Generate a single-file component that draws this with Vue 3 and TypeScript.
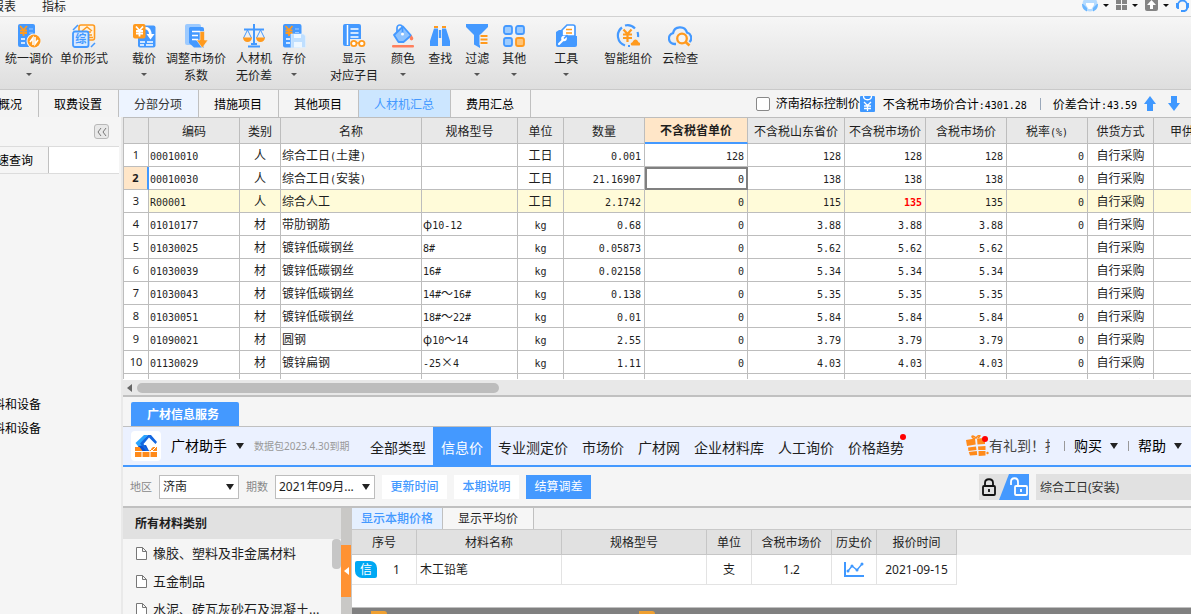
<script setup lang="ts">
import { h, ref } from 'vue'

interface Tool { icon: string; lines: string[]; menu?: boolean }
interface Row {
  code: string; kind: string; name: string; spec: string; unit: string
  qty: string; prov: string; sd: string; net: string; gross: string; tax: string
}

// Half-width characters take exactly half the width of a Chinese character.
const Song = (props: { t: string }) =>
  (props.t.match(/[\x20-\x7e]+|[^\x20-\x7e]+/g) ?? []).map(s =>
    h('span', { class: s.charCodeAt(0) < 127 ? 'half' : 'full' }, s))
Song.props = ['t']

const B = '#4499ff'
const O = '#ff9a1e'
const yen = (x: number, y: number, c: string) =>
  `<path d="M${x} ${y}l3.5 4l3.5-4M${x} ${y + 4.5}h7M${x} ${y + 7}h7M${x + 3.5} ${y + 4}v6" fill="none" stroke="${c}" stroke-width="1.8"/>`

const icons: Record<string, string> = {
  unify: `<rect x="1" width="17" height="23" rx="2" fill="${B}"/>${yen(3, 2, O)}<path d="M12 5h4M12 9h4" stroke="#9ccaff" stroke-width="1"/><path d="M4 15h4M4 19h4" stroke="#fff" stroke-width="1.5"/><circle cx="17" cy="17" r="7.5" fill="#f4f4f4"/><circle cx="17" cy="17" r="6.5" fill="${O}"/><path d="M13 18l3-4v7M21 16l-3 4v-7" fill="none" stroke="#fff" stroke-width="1.6"/>`,
  form: `<path d="M1 6L6 1M19 23l4-4" stroke="${B}" stroke-width="1.5"/><rect x="7" y="1" width="15.5" height="15" rx="2" fill="#fff3e0" stroke="${O}" stroke-width="1.6"/><path d="M10 7l5-4l5 4M11 8h8M17 11h3M17 13.500h4" stroke="${O}" stroke-width="1.5" fill="none"/><rect x="1" y="7.5" width="15.500" height="15.5" rx="2" fill="#d8eaff" stroke="${B}" stroke-width="1.8"/><text x="8.800" y="19.3" text-anchor="middle" font-size="11" font-weight="700" fill="${B}" font-family="Noto Sans CJK SC, sans-serif">综</text>`,
  load: `<rect x="6" y="1.5" width="17.500" height="22" rx="2" fill="${B}"/><path d="M8 18h5M15 18h6M8 21h4M14 21h7" stroke="#fff" stroke-width="1.3"/><path d="M13 4c4 0 5.500 3 5.500 8" fill="none" stroke="#fff" stroke-width="2.600"/><path d="M14.500 10h8l-4 5.500z" fill="#fff"/><rect x="1" y="0" width="12.500" height="14.500" rx="2" fill="${O}"/>${yen(4, 2.5, '#fff')}`,
  adjust: `<rect x="1" y="0" width="16" height="21" rx="2" fill="#9ccaff"/><path d="M6 3h12a2 2 0 0 1 2 2v18.500H10L5 19V4z" fill="${B}"/><path d="M8 7.500h8M8 11.500h6M8 15.500h6" stroke="#fff" stroke-width="1.7"/><path d="M16 7.500h4.500V16h3.500l-5.700 8l-5.800-8H16z" fill="${O}" stroke="#f0f0f0" stroke-width=".6"/>`,
  scale: `<path d="M12 0v21M2 5.500h20M6 22.500h12M9 20h6" stroke="${B}" stroke-width="2"/><path d="M5.500 6L1.500 14M5.500 6l4 8M18.500 6l-4 8M18.500 6l4 8" stroke="${B}" stroke-width="1" fill="none"/><path d="M1 13.500h9a4.500 4.500 0 0 1-9 0zM14 13.500h9a4.500 4.500 0 0 1-9 0z" fill="${O}"/>`,
  store: `<rect x="1" width="18.500" height="23.500" rx="2" fill="${B}"/>${yen(3.5, 2, O)}<path d="M13 5h4M13 8.500h4" stroke="#9ccaff"/><path d="M4 15h4M4 19h4" stroke="#fff" stroke-width="1.500"/><path d="M9 10h12.500l2 2v11.500H9z" fill="#bfdfff" stroke="#e4f1ff" stroke-width=".6"/><path d="M12 10h7v4h-7zM12 18h8v5.500h-8z" fill="#eef7ff"/>`,
  show: `<rect x="1" y="0" width="18" height="22" rx="2" fill="${B}"/><path d="M5.500 1v20" stroke="#fff" stroke-width="1.500"/><path d="M8.500 5h8M8.500 9h8M8.500 13h8" stroke="#fff" stroke-width="1.600"/><path d="M8 24v-9h16v9z" fill="#eee"/><circle cx="11.800" cy="19.500" r="2.700" fill="#fff" stroke="${O}" stroke-width="1.800"/><circle cx="19.800" cy="19.500" r="2.700" fill="#fff" stroke="${O}" stroke-width="1.800"/><path d="M14 19h3" stroke="${O}" stroke-width="1.500"/>`,
  color: `<path d="M3 11L12 2.500l8 9l-7.500 6.500h-5z" fill="#8dc3ff" stroke="${B}" stroke-width="1.800" stroke-linejoin="round"/><path d="M6 8V4c0-4 5.500-4 5.500 0v6" fill="none" stroke="${B}" stroke-width="1.700"/><circle cx="11.500" cy="10" r="1.500" fill="#fff"/><path d="M20.500 11c1 1.800 1.800 2.500 1.800 3.600a1.800 1.800 0 0 1-3.600 0c0-1.100.8-1.800 1.800-3.600z" fill="#ff7f5c"/><rect x="1" y="21" width="22" height="2.600" rx="1" fill="#ff7f5c"/>`,
  find: `<path d="M6 4.500h4V22H2v-5zM14 4.500h4L22 17v5h-8z" fill="${B}"/><path d="M10.800 6h2.400v8h-2.400z" fill="${B}"/><path d="M6 2h4v2H6zM14 2h4v2h-4z" fill="${O}"/>`,
  filter: `<path d="M1 0h22v3l-8 8v13l-6-3.500V11L1 3z" fill="${B}"/><path d="M14.500 12.500h8M14.500 16h8M14.500 19.500h8" stroke="#f2f2f2" stroke-width="3.500"/><path d="M15.500 12h7M15.500 15.500h7M15.500 19h7" stroke="${O}" stroke-width="1.800"/>`,
  other: `<g fill="#9dccff" stroke="${B}" stroke-width="1.800"><rect x="2" y="2" width="8" height="8" rx="2"/><rect x="14" y="2" width="8" height="8" rx="2"/><rect x="2" y="14" width="8" height="8" rx="2"/></g><rect x="14" y="14" width="8" height="8" rx="2" fill="#ffc477" stroke="${O}" stroke-width="1.800"/>`,
  tool: `<path d="M8 6L13 1h6a2 2 0 0 1 2 2v9H8z" fill="#fff" stroke="${B}" stroke-width="1.700"/><path d="M12 5.500h6M12 9h6" stroke="${O}" stroke-width="1.600"/><path d="M2 8l3-2h3v6h15v9a2 2 0 0 1-2 2H4a2 2 0 0 1-2-2z" fill="${B}"/><path d="M5 20l4-4" stroke="#fff" stroke-width="2.200" stroke-linecap="round"/><circle cx="10" cy="14.500" r="2.800" fill="#fff"/><path d="M10 14.500l3.500-3.500" stroke="${B}" stroke-width="1.600"/>`,
  smart: `<path d="M9 21.500A10.300 10.300 0 0 1 6 3.500M9 1.500a10.300 10.300 0 0 1 10 3M21.500 8a10.300 10.300 0 0 1 .5 5M12 22h2" fill="none" stroke="${B}" stroke-width="2.200"/><path d="M7.500 5.500l4 4.500l4-4.500M7 10.500h9M7 14h9M11.500 10v8" fill="none" stroke="${O}" stroke-width="2.200"/><path d="M16.500 21.500a1.500 1.500 0 0 1-.5-3c1 0 1-3 3.500-3s2.500 3 3.500 3a1.500 1.500 0 0 1-.5 3z" fill="${O}"/>`,
  cloud: `<path d="M8 20H6.500A5.500 5.500 0 0 1 5 9.200 7.200 7.200 0 0 1 19 8.500a5.600 5.600 0 0 1 2.500 9.500" fill="none" stroke="${B}" stroke-width="2.300"/><circle cx="14" cy="14.500" r="4.800" fill="#f4f4f4" stroke="${O}" stroke-width="2.300"/><path d="M17.500 18l4 3.500" stroke="${O}" stroke-width="2.600"/>`,
}

const groups: { cls: string; tools: Tool[] }[] = [
  { cls: 'g-a', tools: [
    { icon: 'unify', lines: ['统一调价'], menu: true },
    { icon: 'form', lines: ['单价形式'] },
  ] },
  { cls: 'g-b', tools: [
    { icon: 'load', lines: ['载价'], menu: true },
    { icon: 'adjust', lines: ['调整市场价', '系数'] },
    { icon: 'scale', lines: ['人材机', '无价差'] },
    { icon: 'store', lines: ['存价'], menu: true },
  ] },
  { cls: 'g-c', tools: [
    { icon: 'show', lines: ['显示', '对应子目'] },
    { icon: 'color', lines: ['颜色'], menu: true },
    { icon: 'find', lines: ['查找'] },
    { icon: 'filter', lines: ['过滤'], menu: true },
    { icon: 'other', lines: ['其他'], menu: true },
  ] },
  { cls: 'g-d', tools: [{ icon: 'tool', lines: ['工具'], menu: true }] },
  { cls: 'g-b', tools: [
    { icon: 'smart', lines: ['智能组价'] },
    { icon: 'cloud', lines: ['云检查'] },
  ] },
]

const tabs = ['工程概况', '取费设置', '分部分项', '措施项目', '其他项目', '人材机汇总', '费用汇总']
const activeTab = ref('人材机汇总')

const columns = ['编码', '类别', '名称', '规格型号', '单位', '数量', '不含税省单价', '不含税山东省价', '不含税市场价', '含税市场价', '税率(%)', '供货方式', '甲供数量']

const mk = (a: string[]): Row => ({
  code: a[0], kind: a[1], name: a[2], spec: a[3], unit: a[4], qty: a[5],
  prov: a[6], sd: a[7], net: a[8], gross: a[9], tax: a[10],
})
const rows: Row[] = [
  ['00010010', '人', '综合工日(土建)', '', '工日', '0.001', '128', '128', '128', '128', '0'],
  ['00010030', '人', '综合工日(安装)', '', '工日', '21.16907', '0', '138', '138', '138', '0'],
  ['R00001', '人', '综合人工', '', '工日', '2.1742', '0', '115', '135', '135', '0'],
  ['01010177', '材', '带肋钢筋', 'φ10-12', 'kg', '0.68', '0', '3.88', '3.88', '3.88', '0'],
  ['01030025', '材', '镀锌低碳钢丝', '8#', 'kg', '0.05873', '0', '5.62', '5.62', '5.62', ''],
  ['01030039', '材', '镀锌低碳钢丝', '16#', 'kg', '0.02158', '0', '5.34', '5.34', '5.34', ''],
  ['01030043', '材', '镀锌低碳钢丝', '14#～16#', 'kg', '0.138', '0', '5.35', '5.35', '5.35', ''],
  ['01030051', '材', '镀锌低碳钢丝', '18#～22#', 'kg', '0.01', '0', '5.84', '5.84', '5.84', '0'],
  ['01090021', '材', '圆钢', 'φ10～14', 'kg', '2.55', '0', '3.79', '3.79', '3.79', '0'],
  ['01130029', '材', '镀锌扁钢', '-25×4', 'kg', '1.11', '0', '4.03', '4.03', '4.03', '0'],
  ['01130031', '材', '镀锌扁钢', '-40×4', 'kg', '1.26', '0', '4.03', '4.03', '4.03', '0'],
].map(mk)

const sources = ['全部类型', '信息价', '专业测定价', '市场价', '广材网', '企业材料库', '人工询价', '价格趋势']
const activeSource = ref('信息价')
const categories = ['橡胶、塑料及非金属材料', '五金制品', '水泥、砖瓦灰砂石及混凝土...']
const controlPrice = ref(false)
const keyword = ref('综合工日(安装)')
</script>

<template>
  <div class="app">
    <header class="menubar">
      <nav class="menus">
        <button type="button">报表</button>
        <button type="button">指标</button>
      </nav>
      <div class="sys">
        <button type="button" aria-label="用户">
          <svg width="16" height="16" viewBox="0 0 16 16"><circle cx="8" cy="4" r="7.500" fill="#b5dbff"/><path d="M0 4a8 8 0 0 0 5 7.500V8L1 4zM16 4a8 8 0 0 1-5 7.500V8l4-4z" fill="#6ab6ff"/><path d="M4 3h8v2l-2.500 4h-3L4 5z" fill="#fff"/></svg>
          <i class="caret small dark"></i>
        </button>
        <button type="button" aria-label="窗口">
          <svg width="11" height="16" viewBox="0 0 11 16"><path d="M0 0h5v4H0zM6 0h5v4H6zM0 5h5v5H0zM6 5h5v5H6z" fill="#848484"/></svg>
          <i class="caret small dark"></i>
        </button>
        <button type="button" aria-label="上传">
          <svg width="13" height="16" viewBox="0 0 13 16"><rect y="-3" width="13" height="14" rx="2" fill="#848484"/><path d="M6.500 0L11 5H8v4H5V5H2z" fill="#fff"/></svg>
          <i class="caret small dark"></i>
        </button>
        <button type="button" aria-label="客服">
          <svg width="13" height="16" viewBox="0 0 13 16"><path d="M2 5a4.500 4.500 0 0 1 9 0M11 8c0 2-2 3-4 3" fill="none" stroke="#3f98ff" stroke-width="1.800"/><path d="M0 3h3v6H1.500L0 7.500zM13 3h-3v6h1.500L13 7.500zM5 10h4v2H5z" fill="#3f98ff"/></svg>
        </button>
      </div>
    </header>

    <div class="ribbon">
      <div v-for="(g, i) in groups" :key="i" class="group" :class="g.cls">
        <button v-for="t in g.tools" :key="t.icon" type="button" class="tool">
          <svg width="24" height="24" viewBox="0 0 24 24" aria-hidden="true" v-html="icons[t.icon]"></svg>
          <span v-for="l in t.lines" :key="l">{{ l }}</span>
          <i v-if="t.menu" class="caret small"></i>
        </button>
      </div>
    </div>

    <div class="tabbar">
      <nav class="tabs">
        <button v-for="t in tabs" :key="t" type="button" :class="{ on: t === activeTab, hover: t === '分部分项' }" @click="activeTab = t">{{ t }}</button>
      </nav>
      <div class="totals">
        <label class="check"><input v-model="controlPrice" type="checkbox" />济南招标控制价</label>
        <svg width="15" height="16" viewBox="0 0 15 16"><rect width="15" height="16" rx="1" fill="#3f98ff"/><path d="M3.500 0c0 5 8 5 8 0M4 6l3.500 3.500L11 6M4 10h7M4 12.500h7M7.500 9v6" fill="none" stroke="#fff" stroke-width="1.300"/></svg>
        <span class="song sum"><Song t="不含税市场价合计:4301.28" /></span>
        <i class="bar"></i>
        <span class="song diff"><Song t="价差合计:43.59" /></span>
        <button type="button" class="move" aria-label="上移"><svg width="12" height="16" viewBox="0 0 12 16"><path d="M6 0l6 8H9v7H3V8H0z" fill="#3f98ff"/></svg></button>
        <button type="button" class="move" aria-label="下移"><svg width="12" height="16" viewBox="0 0 12 16"><path d="M6 15l6-8H9V0H3v7H0z" fill="#3f98ff"/></svg></button>
      </div>
    </div>

    <div class="body">
      <aside class="side">
        <div class="side-top"><button type="button" class="fold" aria-label="收起"><svg width="10" height="8" viewBox="0 0 10 8"><path d="M4 0L1 4l3 4M9 0L6 4l3 4" fill="none" stroke="#777" stroke-width="1"/></svg></button></div>
        <div class="side-tabs"><button type="button">快速查询</button><span></span></div>
        <ul class="side-list">
          <li>料和设备</li>
          <li>料和设备</li>
        </ul>
      </aside>

      <main class="main">
        <div class="grid-wrap">
          <table class="grid song">
            <colgroup>
              <col class="w-no" /><col class="w-code" /><col class="w-kind" /><col class="w-name" /><col class="w-spec" /><col class="w-unit" /><col class="w-std" /><col class="w-prov" /><col class="w-sd" /><col class="w-std" /><col class="w-std" /><col class="w-std" /><col class="w-way" /><col class="w-std" />
            </colgroup>
            <thead>
              <tr><th></th><th v-for="c in columns" :key="c" scope="col" :class="{ cur: c === '不含税省单价' }"><Song :t="c" /></th></tr>
            </thead>
            <tbody>
              <tr v-for="(r, i) in rows" :key="r.code" :class="{ sel: i === 1, warm: i === 2 }">
                <td class="no">{{ i + 1 }}</td>
                <td><Song :t="r.code" /></td>
                <td class="c">{{ r.kind }}</td>
                <td><Song :t="r.name" /></td>
                <td><Song :t="r.spec" /></td>
                <td class="c"><Song :t="r.unit" /></td>
                <td class="n"><Song :t="r.qty" /></td>
                <td class="n" :class="{ focus: i === 1 }"><Song :t="r.prov" /></td>
                <td class="n"><Song :t="r.sd" /></td>
                <td class="n" :class="{ alert: i === 2 }"><Song :t="r.net" /></td>
                <td class="n"><Song :t="r.gross" /></td>
                <td class="n"><Song :t="r.tax" /></td>
                <td class="c">自行采购</td>
                <td></td>
              </tr>
            </tbody>
          </table>
        </div>
        <div class="hscroll"><i class="left-arrow"></i><div class="thumb"></div></div>

        <section class="info">
          <div class="info-tabs"><button type="button">广材信息服务</button></div>
          <div class="assist">
            <span class="logo">
              <svg width="24" height="24" viewBox="0 0 24 24"><path d="M10 1h4L7.500 9 14 17H8L1.500 9z" fill="#2aa5ff"/><path d="M4 12l8-1 3 6H8z" fill="#0b4fd0"/><path d="M14 1h3l6 7-1.500 2L15 3.500 9.500 10l5.500 7h-3L6 9.500z" fill="#1467e0"/><path d="M1 13h4.500l3 4H15l4-4h4v10H1z" fill="#ff8a1a"/><path d="M1 17.500h22M8 17v6M16 17v6M14 13l4 4 4-4" stroke="#fff" stroke-width="1" fill="none"/></svg>
            </span>
            <button type="button" class="brand">广材助手<i class="caret"></i></button>
            <span class="expire">数据包2023.4.30到期</span>
            <nav class="sources">
              <button v-for="s in sources" :key="s" type="button" :class="{ on: s === activeSource, dot: s === '价格趋势' }" @click="activeSource = s">{{ s }}</button>
            </nav>
            <div class="extras">
              <svg width="23" height="22" viewBox="0 0 23 22"><path d="M0 5l9-1.500.700 6L1 11zM11 3.500l8-.5v6l-7.500.5zM2 12.500l8-1 .5 3.500-8 1zM2.800 17l8-1 .400 4-7.200.5zM12 11.500l7.500-.500v4H12.300zM12.500 16h7v4.500l-6.800.500z" fill="#ff8a1a"/><path d="M9 4C4 2 6-1 10 3c3-4 6-3 2 0" fill="none" stroke="#ff8a1a" stroke-width="1.500"/><circle cx="19" cy="4" r="3" fill="#f00"/><circle cx="21.500" cy="18" r="1.200" fill="#ff8a1a"/></svg>
              <a href="#" class="gift">有礼到！抽奖</a>
              <i class="vbar"></i>
              <button type="button">购买<i class="caret"></i></button>
              <i class="vbar"></i>
              <button type="button">帮助<i class="caret"></i></button>
            </div>
          </div>

          <div class="filters">
            <label for="area">地区</label>
            <span class="pick area"><select id="area"><option>济南</option></select><i class="caret"></i></span>
            <label for="term">期数</label>
            <span class="pick term"><select id="term"><option>2021年09月...</option></select><i class="caret"></i></span>
            <button type="button" class="btn">更新时间</button>
            <button type="button" class="btn">本期说明</button>
            <button type="button" class="btn primary">结算调差</button>
            <div class="query">
              <button type="button" class="lock" aria-label="锁定">
                <svg width="50" height="26" viewBox="0 0 50 26"><path d="M0 0h50v26H0z" fill="#e1e1e1"/><path d="M30 0h20v26H20z" fill="#4499ff"/><rect x="4" y="12" width="12" height="9" rx="1" fill="none" stroke="#111" stroke-width="1.800"/><path d="M6 12V9c0-5 8-5 8 0v3M10 15v3" fill="none" stroke="#111" stroke-width="1.800"/><rect x="36" y="12" width="12" height="9" rx="1" fill="none" stroke="#fff" stroke-width="1.800"/><path d="M32 11V8c0-5 7-5 7 0v4M42 15v3" fill="none" stroke="#fff" stroke-width="1.800"/></svg>
              </button>
              <input v-model="keyword" type="text" aria-label="材料名称" />
            </div>
          </div>

          <div class="panes">
            <div class="cats">
              <h2>所有材料类别</h2>
              <div class="cat-body">
                <ul>
                  <li v-for="c in categories" :key="c">
                    <svg width="11" height="13" viewBox="0 0 11 13"><path d="M.5.500h6l4 4v8H.5zM6.500.500v4h4" fill="#fff" stroke="#777"/></svg>{{ c }}
                  </li>
                </ul>
                <i class="vthumb"></i>
              </div>
            </div>
            <div class="split"><button type="button" aria-label="折叠"><svg width="5" height="8" viewBox="0 0 5 8"><path d="M5 0v8L0 4z" fill="#fff"/></svg></button></div>
            <div class="prices">
              <div class="price-tabs"><button type="button" class="on">显示本期价格</button><button type="button">显示平均价</button></div>
              <div class="price-body">
                <table>
                  <colgroup><col class="p-no" /><col class="p-wide" /><col class="p-wide" /><col class="p-slim" /><col class="p-mid" /><col class="p-slim" /><col class="p-mid" /></colgroup>
                  <thead><tr><th>序号</th><th>材料名称</th><th>规格型号</th><th>单位</th><th>含税市场价</th><th>历史价</th><th>报价时间</th></tr></thead>
                  <tbody>
                    <tr>
                      <td><div class="num"><span class="badge">信</span>1</div></td>
                      <td class="l">木工铅笔</td><td></td><td>支</td><td>1.2</td>
                      <td><svg width="20" height="15" viewBox="0 0 20 15"><path d="M1 0v14h19" fill="none" stroke="#3f98ff" stroke-width="2"/><path d="M4 9l4-5 5 4 5-6" fill="none" stroke="#3f98ff" stroke-width="1.300"/><g fill="#3f98ff"><circle cx="4" cy="9" r="1.500"/><circle cx="8" cy="4" r="1.500"/><circle cx="13" cy="8" r="1.500"/><circle cx="18" cy="2" r="1.500"/></g></svg></td>
                      <td>2021-09-15</td>
                    </tr>
                  </tbody>
                </table>
              </div>
              <div class="foot"><i></i><i></i></div>
            </div>
          </div>
        </section>
      </main>
    </div>
  </div>
</template>

<style>
body { margin: 0; overflow: hidden; }
.song .half { font: 10px "DejaVu Sans Mono", monospace; font-weight: inherit; line-height: 1; }
</style>

<style scoped>
* { box-sizing: border-box; }
.app {
  display: flex; flex-direction: column; height: 100vh; overflow: hidden;
  background: #f5f5f5; color: #1e1e1e;
  font: 12px/17px "Noto Sans", "Noto Sans CJK SC", sans-serif;
}
button { border: 0; padding: 0; background: none; font: inherit; color: inherit; white-space: nowrap; cursor: pointer; }
ul { list-style: none; margin: 0; padding: 0; }
svg { display: block; flex: none; }
.song { font-family: "Noto Sans CJK SC", sans-serif; }
.caret { display: block; border: 4px solid transparent; border-top: 6px solid #222; border-bottom: 0; }
.caret.small { border-width: 3px 3px 0; border-top-color: #555; }
.caret.dark { border-top-color: #111; }

.menubar { display: flex; justify-content: space-between; flex: none; height: 17px; border-bottom: 1px solid #d2d2d2; background: #f7f7f7; overflow: hidden; }
.menus { display: flex; gap: 26px; margin-left: -8px; height: 13px; align-items: center; }
.sys { display: flex; gap: 7px; padding-right: 2px; }
.sys button { display: flex; gap: 5px; align-items: flex-start; }
.sys .caret { margin-top: 4px; }

.ribbon { display: flex; flex: none; height: 73px; padding: 7px 5px 0; gap: 24px; background: linear-gradient(#f6f6f6, #dedede); border-bottom: 1px solid #c9c9c9; }
.group { display: flex; gap: 10px; }
.g-a { gap: 7px; }
.g-c { gap: 13px; }
.g-d { padding: 0 2px 0 4px; }
.tool { display: flex; flex-direction: column; align-items: center; }
.tool svg { margin: 0 -6px 2px; }
.tool .caret { margin-top: 6px; }

.tabbar { display: flex; flex: none; justify-content: space-between; height: 27px; background: #f4f4f4; overflow: hidden; }
.tabs { display: flex; margin-left: -41px; flex: none; }
.tabs button { padding: 2px 16px 0 15px; border-right: 1px solid #c0c0c0; color: #000; }
.tabs .hover { background: #edf4ff; color: #333; }
.tabs .on { background: #cce6ff; color: #4499ff; }
.totals { display: flex; align-items: center; padding-right: 11px; white-space: nowrap; color: #000; }
.check { display: flex; align-items: center; gap: 6px; }
.check input { appearance: none; width: 14px; height: 14px; margin: 0; border: 1px solid #888; border-radius: 2px; background: #fff; }
.check input:checked { background: #4499ff; }
.sum { margin-left: 8px; }
.bar { width: 1px; height: 12px; margin: 0 12px 0 13px; background: #9aa8ba; }
.diff { margin-right: 7px; }
.move + .move { margin-left: 12px; }

.body { display: flex; flex: 1; min-height: 0; }
.side { flex: none; width: 123px; border-right: 2px solid #e9e9e9; overflow: hidden; color: #000; }
.side-top { display: flex; justify-content: flex-end; align-items: center; height: 29px; padding-right: 12px; }
.fold { display: flex; align-items: center; justify-content: center; width: 15px; height: 15px; border: 1px solid #b8b8b8; border-radius: 3px; background: #e8e8e8; }
.side-tabs { display: flex; width: 119px; height: 28px; border: solid #dcdcdc; border-width: 1px 0; }
.side-tabs button { margin-left: -15px; padding-right: 15px; border-right: 1px solid #c0c0c0; }
.side-tabs span { flex: 1; background: #fff; }
.side-list { margin: 219px 0 0 -7px; line-height: 24px; }

.main { display: flex; flex-direction: column; flex: 1; min-width: 0; }
.grid-wrap { flex: 1; min-height: 0; overflow: hidden; border-top: 1px solid #bdbdbd; background: #fff; }
.grid { width: 1112px; border-collapse: separate; border-spacing: 0; table-layout: fixed; line-height: 22px; }
.grid th, .grid td { height: 23px; padding: 0 3px 0 1px; border: solid #bdbdbd; border-width: 0 1px 1px 0; white-space: nowrap; }
.grid th { height: 26px; padding: 0; background: #e8e8e8; font-weight: 400; }
.grid th:first-child, .grid td:first-child { border-left-width: 1px; }
.grid th.cur { background: #ffe6c8; border-bottom: 2px solid #4499ff; font-weight: 700; }
.grid .no { padding: 0; text-align: center; background: #fff; font-family: "Noto Sans", sans-serif; font-size: 11px; }
.grid .c { text-align: center; padding: 0; }
.grid .n { text-align: right; }
.grid .sel .no { background: #ffe6c8; border-right: 2px solid #4499ff; font-weight: 700; }
.grid .warm td { background: #fffbd9; }
.grid .warm .no { background: #fff; }
.grid .alert { color: #f00; font-weight: 700; }
.grid .focus { outline: 2px solid #808080; outline-offset: -2px; }
.w-no { width: 26px; } .w-code { width: 91px; } .w-kind { width: 41px; } .w-name { width: 141px; }
.w-spec { width: 96px; } .w-unit { width: 46px; } .w-std { width: 81px; } .w-prov { width: 103px; }
.w-sd { width: 97px; } .w-way { width: 66px; }
.hscroll { display: flex; align-items: center; flex: none; gap: 5px; height: 18px; padding-left: 4px; border-bottom: 2px solid #c0c0c0; background: #e8e8e8; border-top: 1px solid #fff; }
.left-arrow { border: 4px solid transparent; border-right: 5px solid #666; border-left: 0; }
.thumb { width: 34%; height: 10px; border-radius: 5px; background: #bdbdbd; }

.info { flex: none; }
.info-tabs { height: 30px; padding: 5px 8px 0; border-bottom: 1px solid #c0c0c0; }
.info-tabs button { height: 24px; padding: 0 20px 0 16px; border-radius: 2px 2px 0 0; background: #4499ff; color: #fff; font-weight: 700; }
.assist { display: flex; align-items: center; height: 40px; padding: 0 9px 0 8px; border-bottom: 2px solid #4499ff; background: #ebf1ff; font-size: 14px; line-height: 20px; white-space: nowrap; }
.logo { display: flex; align-items: center; justify-content: center; flex: none; width: 30px; height: 30px; border-radius: 4px; background: #fff; }
.brand { display: flex; align-items: center; gap: 9px; margin-left: 10px; color: #000; }
.expire { margin-left: 10px; width: 109px; color: #999; font-size: 10px; }
.sources { display: flex; align-self: stretch; }
.sources button { padding: 3px 7px 0; }
.sources .on { padding: 3px 8px 0; background: #4499ff; color: #fff; }
.sources .dot { position: relative; }
.sources .dot::after { content: ""; position: absolute; top: 7px; right: 5px; width: 6px; height: 6px; border-radius: 50%; background: #f00; }
.extras { display: flex; align-items: center; margin-left: auto; color: #000; }
.gift { width: 61px; overflow: hidden; color: #444; text-decoration: none; }
.vbar { width: 1px; height: 10px; margin: 0 9px 0 10px; background: #999; }
.gift + .vbar { margin-left: 14px; }
.extras button { display: flex; align-items: center; gap: 8px; }

.filters { display: flex; align-items: center; height: 41px; padding-left: 7px; border-bottom: 2px solid #c0c0c0; }
.filters label { color: #888; font-size: 11px; }
.pick { position: relative; height: 24px; margin: 0 7px; }
.pick.area { width: 80px; }
.pick.term { width: 100px; }
.pick select { appearance: none; width: 100%; height: 24px; padding: 0 3px; border: 1px solid #bdbdbd; border-radius: 0; background: #fff; color: #1e1e1e; font: inherit; }
.pick .caret { position: absolute; right: 5px; top: 9px; pointer-events: none; }
.btn { width: 65px; height: 24px; margin-right: 7px; background: #fff; color: #4499ff; font-weight: 500; }
.btn.primary { background: #4499ff; color: #fff; font-weight: 400; }
.query { display: flex; margin-left: auto; gap: 7px; }
.query input { width: 155px; height: 26px; padding: 0 4px; border: 0; background: #e1e1e1; color: #333; font: inherit; }

.panes { display: flex; height: 106px; overflow: hidden; }
.cats { flex: none; width: 218px; }
.cats h2 { margin: 0; height: 31px; padding-left: 12px; background: #e1e1e1; font-size: 12px; line-height: 31px; }
.cat-body { display: flex; }
.cat-body ul { flex: 1; line-height: 28px; font-size: 13px; white-space: nowrap; }
.cat-body li { display: flex; align-items: center; gap: 6px; height: 28px; padding-left: 13px; }
.vthumb { flex: none; width: 9px; height: 30px; border-radius: 4px; background: #c6c6c6; }
.split { flex: none; width: 11px; padding: 37px 1px 0 0; background: #c9c8c6; }
.split button { display: flex; align-items: center; justify-content: center; width: 10px; height: 52px; background: #ff9233; }
.prices { display: flex; flex-direction: column; flex: 1; min-width: 0; }
.price-tabs { display: flex; flex: none; height: 22px; border-bottom: 1px solid #c9c9c9; background: #f1f1f1; }
.price-tabs button { width: 91px; border-right: 1px solid #c0c0c0; background: #f6f6f6; }
.price-tabs .on { background: #e5f0ff; color: #4499ff; font-weight: 500; }
.price-body { flex: 1; border-bottom: 1px solid #c0c0c0; background: linear-gradient(#efefef 25px, #fff 25px); }
.prices table { width: 605px; border-collapse: separate; border-spacing: 0; table-layout: fixed; }
.prices th { height: 25px; padding: 0; border: solid #c6c6c6; border-width: 0 1px 1px 0; background: #e1e1e1; font-weight: 400; }
.prices td { height: 30px; padding: 0; border: solid #e3e3e3; border-width: 0 1px 1px 0; background: #fff; text-align: center; }
.prices td svg { margin: auto; }
.prices td.l { padding-left: 3px; text-align: left; }
.p-no { width: 65px; } .p-wide { width: 145px; } .p-slim { width: 45px; } .p-mid { width: 80px; }
.num { display: flex; align-items: center; gap: 16px; padding-left: 3px; }
.badge { width: 22px; height: 17px; border-radius: 2px 7px 2px 7px; background: #00a8f3; color: #fff; }
.foot { display: flex; flex: none; gap: 252px; height: 6px; padding: 3px 0 0 19px; background: #808080; }
.foot i { width: 16px; border-radius: 0 4px 0 0; background: #f0a030; }
</style>
